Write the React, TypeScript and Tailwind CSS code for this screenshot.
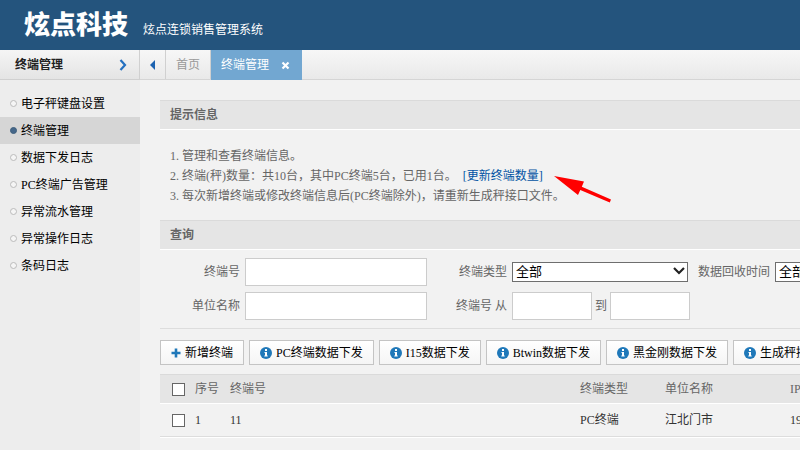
import { ReactNode } from "react";

const menuItems = [
    "电子秤键盘设置",
    "终端管理",
    "数据下发日志",
    "PC终端广告管理",
    "异常流水管理",
    "异常操作日志",
    "条码日志",
];

const actions = [
    "PC终端数据下发",
    "I15数据下发",
    "Btwin数据下发",
    "黑金刚数据下发",
    "生成秤接口文件",
];

const terminals = [
    { id: 1, code: "11", type: "PC终端", unit: "江北门市", ip: "192.168.1.11" },
];

function InfoIcon() {
    return (
        <svg width="12" height="12" viewBox="0 0 12 12" className="shrink-0">
            <circle cx="6" cy="6" r="6" fill="#1f78b9" />
            <path
                d="M5 2h2v2H5zM4.5 5H7v3.5h.7v1H4.3v-1H5V6h-.5z"
                fill="#fff"
            />
        </svg>
    );
}

function PlusIcon() {
    return (
        <svg width="10" height="10" viewBox="0 0 10 10" className="shrink-0">
            <path
                d="M3.7 .5h2.6v3.2h3.2v2.6H6.3v3.2H3.7V6.3H.5V3.7h3.2z"
                fill="#1f78b9"
            />
        </svg>
    );
}

function SectionTitle({ children }: { children: ReactNode }) {
    return (
        <h2 className="h-[30px] border-t border-t-[#dadada] border-b border-b-white bg-[#e5e5e5] px-2.5 font-bold leading-7 text-[#666]">
            {children}
        </h2>
    );
}

function ActionButton({
    icon,
    children,
}: {
    icon: ReactNode;
    children: ReactNode;
}) {
    return (
        <button
            type="button"
            className="flex h-[25px] shrink-0 items-center gap-1 border border-[#c4c4c4] bg-linear-to-b from-white to-[#f5f5f5] px-2.5 text-black"
        >
            {icon}
            {children}
        </button>
    );
}

function Select({ id, className }: { id: string; className: string }) {
    return (
        <div className={`relative h-5 ${className}`}>
            <select
                id={id}
                className="block h-5 w-full appearance-none border border-[#6e6e6e] bg-white pl-[3px] text-[13px] leading-[18px] text-black"
            >
                <option>全部</option>
            </select>
            <svg
                width="12"
                height="8"
                viewBox="0 0 12 8"
                className="pointer-events-none absolute right-[3px] top-[5px]"
            >
                <path
                    d="M1 1l5 5 5-5"
                    fill="none"
                    stroke="#222"
                    strokeWidth="2.2"
                />
            </svg>
        </div>
    );
}

const inputClass = "h-7 border border-[#ccc] bg-white px-1";
const checkboxClass =
    "block size-[13px] appearance-none border border-[#666] bg-white";
const headCellClass =
    "border-t border-b border-t-[#dadada] border-b-white p-0 font-normal";
const cellClass = "border-b border-[#ddd] p-0";

export default function App() {
    return (
        <div
            lang="zh-CN"
            className="flex min-h-screen flex-col overflow-x-hidden whitespace-nowrap bg-[#f2f2f2] font-['Liberation_Serif','Noto_Sans_CJK_SC',serif] text-xs text-[#666]"
        >
            <header className="flex h-[50px] items-center bg-[#24547d] pl-6 text-white">
                <h1 className="pt-0.5 text-[26px] font-black leading-[48px]">
                    炫点科技
                </h1>
                <span className="ml-[15px] pt-2.5">炫点连锁销售管理系统</span>
            </header>

            <div className="flex flex-1">
                <aside className="w-[140px] shrink-0 bg-[#ededed]">
                    <div className="flex h-[30px] items-center justify-between border-r border-b border-[#d0d0d0] bg-linear-to-b from-[#f5f5f5] to-[#e4e4e4] pr-3 pl-[15px] font-bold text-[#222]">
                        终端管理
                        <svg width="8" height="12" viewBox="0 0 8 12">
                            <path
                                d="M1.5 1l4.5 5-4.5 5"
                                fill="none"
                                stroke="#2470c0"
                                strokeWidth="2.2"
                            />
                        </svg>
                    </div>
                    <nav className="pt-2.5">
                        {menuItems.map((item) => {
                            const active = item === "终端管理";
                            return (
                                <a
                                    key={item}
                                    href="#"
                                    className={`flex h-[27px] items-center gap-1 pl-2.5 text-black ${
                                        active ? "bg-[#d6d6d6]" : ""
                                    }`}
                                >
                                    <span
                                        className={`size-[7px] rounded-full border ${
                                            active
                                                ? "border-[#3f5f7d] bg-[#45678a]"
                                                : "border-[#bbb] bg-[#f5f5f5]"
                                        }`}
                                    ></span>
                                    {item}
                                </a>
                            );
                        })}
                    </nav>
                </aside>

                <main className="min-w-0 flex-1 overflow-hidden">
                    <div className="flex h-[30px] border-b border-[#d5d5d5] bg-linear-to-b from-[#f7f7f7] to-[#e9e9e9]">
                        <button
                            type="button"
                            aria-label="向左"
                            className="flex h-[29px] w-[26px] items-center justify-center border-r border-[#d0d0d0]"
                        >
                            <svg width="5" height="10" viewBox="0 0 5 10">
                                <path d="M5 0v10L0 5z" fill="#1c62b0" />
                            </svg>
                        </button>
                        <a
                            href="#"
                            className="flex h-[29px] w-[45px] items-center justify-center border-r border-[#d0d0d0] text-[#999]"
                        >
                            首页
                        </a>
                        <div className="flex h-[30px] w-[91px] items-center justify-between bg-[#72a7d1] pr-3 pl-2.5 text-white">
                            <a href="#">终端管理</a>
                            <button type="button" aria-label="关闭">
                                <svg width="9" height="9" viewBox="0 0 9 9">
                                    <path
                                        d="M1.5 1.5l6 6M7.5 1.5l-6 6"
                                        stroke="#fff"
                                        strokeWidth="2.2"
                                    />
                                </svg>
                            </button>
                        </div>
                    </div>

                    <div className="pt-5 pl-5">
                        <SectionTitle>提示信息</SectionTitle>
                        <div className="relative px-2.5 pt-4 pb-3.5 leading-5">
                            <p>1. 管理和查看终端信息。</p>
                            <p>
                                2.
                                终端(秤)数量：共10台，其中PC终端5台，已用1台。{" "}
                                <a href="#" className="ml-[3px] text-[#0052a3]">
                                    [更新终端数量]
                                </a>
                            </p>
                            <p>
                                3.
                                每次新增终端或修改终端信息后(PC终端除外)，请重新生成秤接口文件。
                            </p>
                            <svg
                                width="58"
                                height="28"
                                viewBox="0 0 58 28"
                                className="absolute left-[394px] top-[45px]"
                            >
                                <path
                                    d="M0 1L30 6.5 27.8 11.7 57 24.4 55.8 27.4 26.3 15 24 20z"
                                    fill="#f00"
                                />
                            </svg>
                        </div>

                        <SectionTitle>查询</SectionTitle>
                        <form className="grid grid-cols-[80px_182px_75px_178px_75px_176px] items-center gap-x-[5px] gap-y-1.5 border-b border-[#ddd] py-2">
                            <label htmlFor="code" className="text-right">
                                终端号
                            </label>
                            <input id="code" className={inputClass} />
                            <label htmlFor="type" className="text-right">
                                终端类型
                            </label>
                            <Select id="type" className="w-[176px]" />
                            <label htmlFor="time" className="text-right">
                                数据回收时间
                            </label>
                            <Select id="time" className="w-[176px]" />
                            <label htmlFor="unit" className="text-right">
                                单位名称
                            </label>
                            <input id="unit" className={inputClass} />
                            <label htmlFor="from" className="text-right">
                                终端号 从
                            </label>
                            <div className="flex items-center justify-between">
                                <input
                                    id="from"
                                    className={`w-20 ${inputClass}`}
                                />
                                <label htmlFor="to">到</label>
                                <input
                                    id="to"
                                    className={`w-20 ${inputClass}`}
                                />
                            </div>
                        </form>

                        <div className="flex gap-[5px] pt-[11px] pb-[9px]">
                            <ActionButton icon={<PlusIcon />}>
                                新增终端
                            </ActionButton>
                            {actions.map((action) => (
                                <ActionButton key={action} icon={<InfoIcon />}>
                                    {action}
                                </ActionButton>
                            ))}
                        </div>

                        <table className="w-full min-w-[900px] table-fixed border-separate border-spacing-0 border-b border-white text-left">
                            <colgroup>
                                <col className="w-[35px]" />
                                <col className="w-[35px]" />
                                <col className="w-[350px]" />
                                <col className="w-[85px]" />
                                <col className="w-[125px]" />
                                <col />
                            </colgroup>
                            <thead>
                                <tr className="h-[30px] bg-[#e5e5e5]">
                                    <th className={headCellClass}>
                                        <input
                                            type="checkbox"
                                            aria-label="全选"
                                            className={`ml-3 ${checkboxClass}`}
                                        />
                                    </th>
                                    <th className={headCellClass}>序号</th>
                                    <th className={headCellClass}>终端号</th>
                                    <th className={headCellClass}>终端类型</th>
                                    <th className={headCellClass}>单位名称</th>
                                    <th className={headCellClass}>IP地址</th>
                                </tr>
                            </thead>
                            <tbody>
                                {terminals.map((terminal) => (
                                    <tr
                                        key={terminal.id}
                                        className="h-[33px] text-[#333]"
                                    >
                                        <td className={cellClass}>
                                            <input
                                                type="checkbox"
                                                aria-label={terminal.code}
                                                className={`ml-3 ${checkboxClass}`}
                                            />
                                        </td>
                                        <td className={cellClass}>
                                            {terminal.id}
                                        </td>
                                        <td className={cellClass}>
                                            {terminal.code}
                                        </td>
                                        <td className={cellClass}>
                                            {terminal.type}
                                        </td>
                                        <td className={cellClass}>
                                            {terminal.unit}
                                        </td>
                                        <td className={cellClass}>
                                            {terminal.ip}
                                        </td>
                                    </tr>
                                ))}
                            </tbody>
                        </table>
                    </div>
                </main>
            </div>
        </div>
    );
}
